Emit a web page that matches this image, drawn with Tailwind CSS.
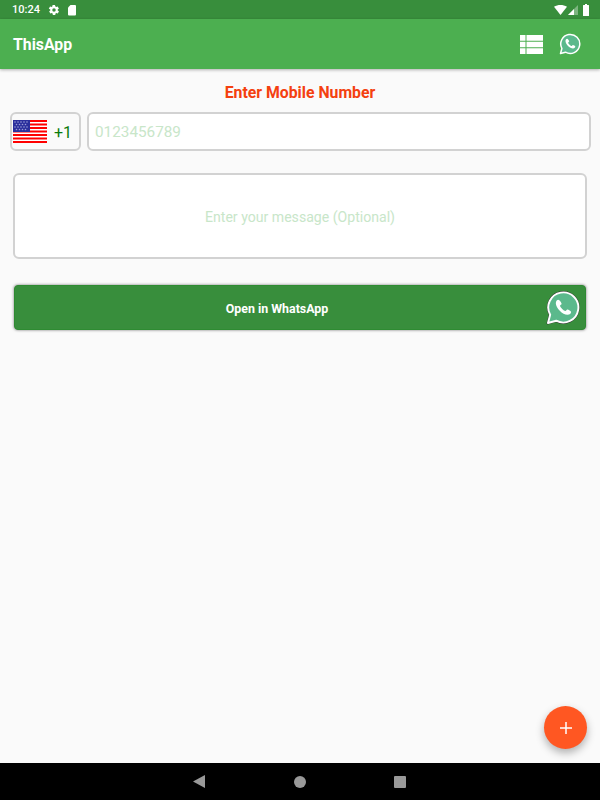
<!DOCTYPE html>
<html>
<head>
<meta charset="utf-8">
<script src="https://cdn.jsdelivr.net/npm/@tailwindcss/browser@4"></script>
</head>
<body class="font-['Roboto',sans-serif]">
<div class="relative flex flex-col w-[600px] h-[800px] overflow-hidden bg-[#fafafa]">
  <div class="flex items-center h-[19px] pl-3 pr-[11px] bg-[#388e3c] text-white shrink-0">
    <span class="text-[11px] leading-none font-medium w-[27px]">10:24</span>
    <svg class="ml-[9px]" width="12" height="12" viewBox="0 0 24 24" fill="#fff"><path d="M19.4 13a7.5 7.5 0 0 0 0-2l2.100-1.600a.5.5 0 0 0 .1-.6l-2-3.500a.5.5 0 0 0-.6-.2l-2.500 1a7.300 7.300 0 0 0-1.700-1L14 2.400a.5.5 0 0 0-.5-.4h-4a.5.5 0 0 0-.5.4l-.4 2.700a7.300 7.300 0 0 0-1.700 1l-2.500-1a.5.5 0 0 0-.6.2l-2 3.500a.5.5 0 0 0 .1.6L4.600 11a7.500 7.500 0 0 0 0 2l-2.100 1.600a.5.5 0 0 0-.1.6l2 3.500c.1.2.4.3.6.2l2.500-1c.5.4 1.100.7 1.700 1l.4 2.700c0 .2.2.4.5.4h4c.3 0 .5-.2.5-.4l.4-2.700c.6-.3 1.200-.6 1.700-1l2.500 1c.2.1.5 0 .6-.2l2-3.500a.5.5 0 0 0-.1-.6zM12 15.500a3.500 3.500 0 1 1 0-7 3.500 3.500 0 0 1 0 7z"/></svg>
    <svg class="ml-[7px]" width="10" height="12" viewBox="0 0 10 12" fill="#fff"><path d="M3.500 1H8a1 1 0 0 1 1 1v8.500a1 1 0 0 1-1 1H2a1 1 0 0 1-1-1V3.500z"/></svg>
    <div class="ml-auto flex items-center">
      <svg width="13" height="10" viewBox="0 0 13 10" fill="#fff"><path d="M0 1.800C3.800-.6 9.200-.6 13 1.800L6.500 10z"/></svg>
      <svg class="ml-[1px]" width="10" height="10" viewBox="0 0 10 10"><path d="M0 10L10 0v10z" fill="#fff" fill-opacity=".35"/><path d="M0 10L6 4v6z" fill="#fff"/></svg>
      <svg class="ml-[5px]" width="6" height="12" viewBox="0 0 6 12" fill="#fff"><path d="M2 0h2v1h1.500a.5.5 0 0 1 .5.500V11.500a.5.5 0 0 1-.5.500H.5a.5.500 0 0 1-.5-.500V1.500A.5.500 0 0 1 .5 1H2z"/></svg>
    </div>
  </div>

  <div class="flex items-center h-[50px] pl-[13px] pr-[19px] bg-[#4caf50] shadow-[0_1px_3px_rgba(0,0,0,0.3)] shrink-0 relative">
    <span class="text-white font-bold text-[15.8px] pt-[1px]">ThisApp</span>
    <svg class="ml-auto" width="23" height="19" viewBox="0 0 23 19" fill="#fff"><path d="M0 0h5.500v5.700H0zM6.500 0H23v5.700H6.500zM0 6.700h5.500v5.600H0zM6.500 6.700H23v5.600H6.500zM0 13.300h5.500V19H0zM6.500 13.300H23V19H6.500z"/></svg>
    <svg class="ml-[16px]" width="22" height="22" viewBox="0 0 22 22"><path d="M1.500 20.500l1.400-5A9.500 9.500 0 1 1 6.500 19.200z" fill="#5bb98c" stroke="#fff" stroke-width="1.500" stroke-linejoin="round"/><path d="M8 5.800c-.5 0-1.500.7-1.500 2.200 0 3 4.300 7.500 7.500 7.500 1.500 0 2.300-1.100 2.300-1.900 0-.5-2-1.600-2.400-1.500-.5.100-.8 1-1.200 1-1 0-3.500-2.400-3.500-3.400 0-.5.900-.8 1-1.200 0-.5-1.100-2.700-2.200-2.700z" fill="#fff"/></svg>
  </div>

  <div class="flex flex-col flex-1">
    <div class="text-center text-[#f4400f] font-bold text-[15.8px] leading-[20px] mt-[14px]">Enter Mobile Number</div>

    <div class="flex gap-[6px] pl-[10px] pr-[9px] mt-[9px]">
      <div class="flex items-center w-[71px] h-[39px] border-2 border-[#d2d2d2] rounded-[6px] pl-[1px]">
        <svg width="34" height="23" viewBox="0 0 34 23">
          <rect width="34" height="23" fill="#fff"/>
          <g fill="#f00">
            <rect y="0" width="34" height="2"/><rect y="3.500" width="34" height="2"/><rect y="7" width="34" height="2"/><rect y="10.500" width="34" height="2"/><rect y="14" width="34" height="2"/><rect y="17.500" width="34" height="2"/><rect y="21" width="34" height="2"/>
          </g>
          <rect width="17" height="12" fill="#2b2f9c"/>
          <g fill="#9a9dd6">
            <circle cx="2" cy="2" r=".8"/><circle cx="5" cy="2" r=".8"/><circle cx="8" cy="2" r=".8"/><circle cx="11" cy="2" r=".8"/><circle cx="14" cy="2" r=".8"/>
            <circle cx="3.500" cy="4.500" r=".8"/><circle cx="6.500" cy="4.500" r=".8"/><circle cx="9.500" cy="4.500" r=".8"/><circle cx="12.500" cy="4.500" r=".8"/>
            <circle cx="2" cy="7" r=".8"/><circle cx="5" cy="7" r=".8"/><circle cx="8" cy="7" r=".8"/><circle cx="11" cy="7" r=".8"/><circle cx="14" cy="7" r=".8"/>
            <circle cx="3.500" cy="9.500" r=".8"/><circle cx="6.500" cy="9.500" r=".8"/><circle cx="9.500" cy="9.500" r=".8"/><circle cx="12.500" cy="9.500" r=".8"/>
          </g>
        </svg>
        <span class="ml-[7px] pt-[2px] text-[#0b7a0b] text-[16px]">+1</span>
      </div>
      <div class="flex items-center flex-1 h-[39px] border-2 border-[#d2d2d2] rounded-[6px] bg-white pl-[6px]">
        <span class="pt-[2px] text-[#c8e6c9] text-[15.3px]">0123456789</span>
      </div>
    </div>

    <div class="flex items-center justify-center h-[86px] mx-[13px] mt-[22px] border-2 border-[#d2d2d2] rounded-[6px] bg-white">
      <span class="pt-[3px] text-[#c8e6c9] text-[14.1px]">Enter your message (Optional)</span>
    </div>

    <div class="relative flex items-center justify-center h-[45px] mx-[14px] mt-[26px] pr-[46px] pt-[3px] rounded-[4px] bg-[#388e3c] border border-[#2e8b32] shadow-[0_0_3px_rgba(0,0,0,0.55)]">
      <span class="text-white font-bold text-[12.4px]">Open in WhatsApp</span>
      <svg class="absolute right-[5px] top-[5px]" width="34" height="34" viewBox="0 0 35 35"><path d="M2 33l2.300-8.500A15.500 15.500 0 1 1 10.500 30.600z" fill="none" stroke="#333" stroke-width="2.800" stroke-linejoin="round"/><path d="M2 33l2.300-8.500A15.500 15.500 0 1 1 10.500 30.600z" fill="#5bb98c" stroke="#fff" stroke-width="2" stroke-linejoin="round"/><path d="M12.500 9c-.8 0-2.400 1.100-2.400 3.500 0 4.800 6.900 12 12 12 2.400 0 3.700-1.800 3.700-3 0-.8-3.200-2.600-3.800-2.400-.8.200-1.300 1.600-1.900 1.600-1.600 0-5.600-3.800-5.600-5.400 0-.8 1.400-1.300 1.600-1.900 0-.8-1.800-4.400-3.600-4.400z" fill="#fff"/></svg>
    </div>
  </div>

  <div class="absolute right-[13px] top-[706px] flex items-center justify-center w-[43px] h-[43px] rounded-full bg-[#ff5722] shadow-[0_4px_8px_rgba(0,0,0,0.3)]">
    <svg width="12" height="12" viewBox="0 0 12 12" fill="#fff"><path d="M5.250 0h1.500v5.250H12v1.500H6.750V12h-1.500V6.750H0v-1.500h5.250z"/></svg>
  </div>

  <div class="flex items-center justify-center h-[37px] pr-[2px] bg-black shrink-0 relative">
    <div class="flex items-center">
      <svg width="12" height="13" viewBox="0 0 12 13" fill="#999"><path d="M12 0v13L0 6.500z"/></svg>
      <div class="ml-[89px] w-[12px] h-[12px] rounded-full bg-[#999]"></div>
      <div class="ml-[88px] w-[12px] h-[12px] rounded-[1px] bg-[#999]"></div>
    </div>
  </div>
</div>
</body>
</html>
